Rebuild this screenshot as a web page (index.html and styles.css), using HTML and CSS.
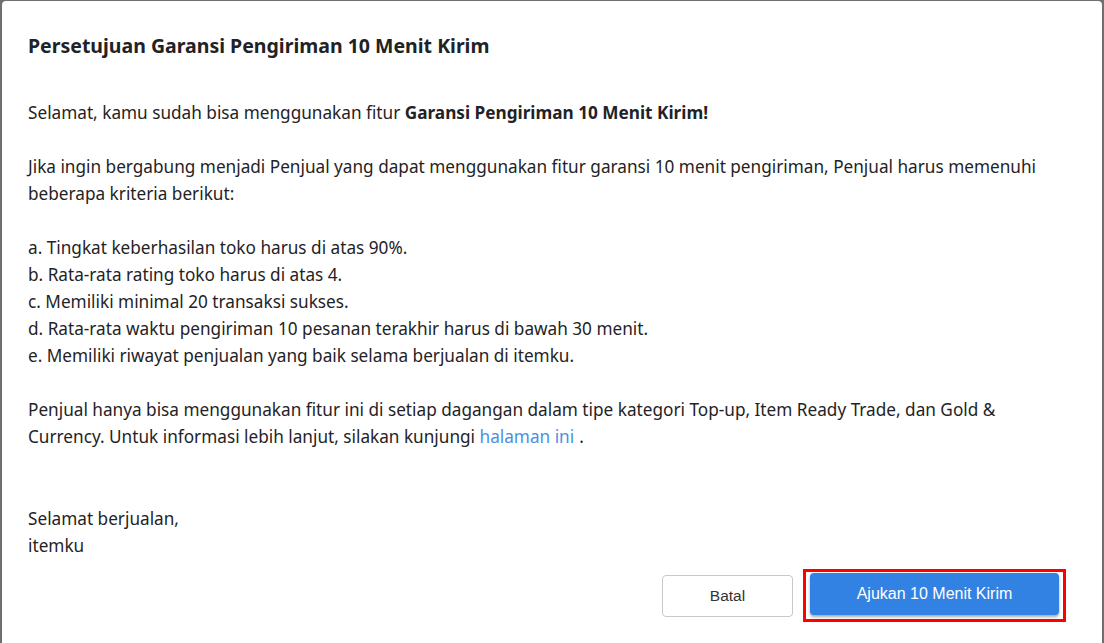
FILE: index.html
```html
<!DOCTYPE html>
<html lang="id">
<head>
<meta charset="utf-8">
<title>Persetujuan Garansi Pengiriman 10 Menit Kirim</title>
<link rel="stylesheet" href="styles.css">
</head>
<body>
<div class="modal">
  <h1 class="modal-title">Persetujuan Garansi Pengiriman 10 Menit Kirim</h1>
  <div class="modal-body">
    <p>Selamat, kamu sudah bisa menggunakan fitur <strong>Garansi Pengiriman 10 Menit Kirim!</strong></p>
    <p>Jika ingin bergabung menjadi Penjual yang dapat menggunakan fitur garansi 10 menit pengiriman, Penjual harus memenuhi beberapa kriteria berikut:</p>
    <p>a. Tingkat keberhasilan toko harus di atas 90%.<br>
    b. Rata-rata rating toko harus di atas 4.<br>
    c. Memiliki minimal 20 transaksi sukses.<br>
    d. Rata-rata waktu pengiriman 10 pesanan terakhir harus di bawah 30 menit.<br>
    e. Memiliki riwayat penjualan yang baik selama berjualan di itemku.</p>
    <p>Penjual hanya bisa menggunakan fitur ini di setiap dagangan dalam tipe kategori Top-up, Item Ready Trade, dan Gold &amp; Currency. Untuk informasi lebih lanjut, silakan kunjungi <a class="link" href="#">halaman ini</a><span class="dot">.</span></p>
    <p class="signoff">Selamat berjualan,<br>itemku</p>
  </div>
  <div class="modal-footer">
    <button class="btn btn-cancel" type="button">Batal</button>
    <div class="highlight">
      <button class="btn btn-primary" type="button">Ajukan 10 Menit Kirim</button>
    </div>
  </div>
</div>
</body>
</html>
```
FILE: styles.css
```css
html, body {
  margin: 0;
  padding: 0;
  height: 100%;
}
body {
  background: #6f6f6f;
  overflow: hidden;
}
.modal {
  margin: 1px 2px 0 2px;
  height: 642px;
  box-sizing: border-box;
  background: #ffffff;
  border-radius: 4px 4px 0 0;
  padding: 30px 0 0 26px;
  font-family: "Noto Sans", "Open Sans", sans-serif;
  color: #1f2326;
}
.modal-title {
  margin: 0;
  font-size: 19.5px;
  font-weight: 700;
  line-height: 30px;
}
.modal-body {
  margin-top: 38px;
  margin-right: 40px;
  font-size: 17.2px;
  line-height: 27px;
}
.modal-body p {
  margin: 0 0 27px 0;
}
.modal-body p.signoff {
  margin-top: 55px;
  margin-bottom: 0;
}
.link {
  color: #4a90e2;
  text-decoration: none;
}
.dot {
  margin-left: 5px;
}
.modal-footer {
  display: flex;
  justify-content: flex-end;
  align-items: center;
  gap: 10px;
  margin-top: 10px;
  padding-right: 36px;
}
.btn {
  font-family: "Liberation Sans", Arial, sans-serif;
  height: 42px;
  border-radius: 4px;
  cursor: pointer;
}
.btn-cancel {
  width: 131px;
  font-size: 15.5px;
  background: #ffffff;
  border: 1px solid #c8c8c8;
  color: #333333;
}
.highlight {
  border: 3px solid #ff0000;
  padding: 1px 4px 4px 4px;
  display: flex;
}
.btn-primary {
  width: 249px;
  font-size: 16px;
  background: #3182e2;
  border: none;
  color: #ffffff;
  box-shadow: 0 2px 3px rgba(0, 0, 0, 0.35);
}
```
